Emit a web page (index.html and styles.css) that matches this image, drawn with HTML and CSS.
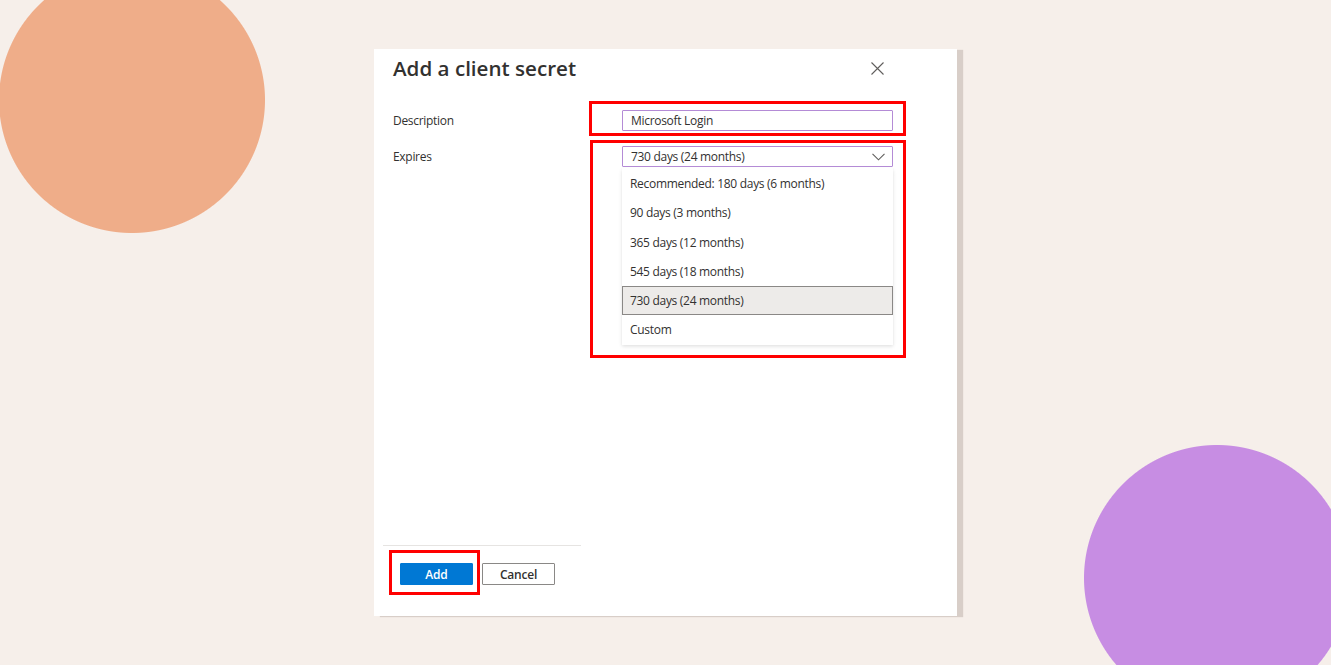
FILE: index.html
```html
<!DOCTYPE html>
<html lang="en">
<head>
  <meta charset="UTF-8">
  <title>Add a client secret</title>
  <link rel="stylesheet" href="styles.css">
</head>
<body>

  <div class="panel">
    <div class="panel-head">
      <h1>Add a client secret</h1>
      <button class="close-btn" aria-label="Close">
        <svg width="13" height="13" viewBox="0 0 13 13"><path d="M0.5 0.5L12.5 12.5M12.5 0.5L0.5 12.5" stroke="#605e5c" stroke-width="1.1" fill="none"/></svg>
      </button>
    </div>

    <div class="form">
      <!-- Descripcion -->
      <div class="row">
        <label class="row-label">Description</label>
        <div class="field">
          <div class="text-input">Microsoft Login</div>
        </div>
      </div>

      <!-- Expira -->
      <div class="row">
        <label class="row-label">Expires</label>
        <div class="field">
          <div class="select">
            <span>730 days (24 months)</span>
            <svg width="13" height="8" viewBox="0 0 13 8"><path d="M0.5 0.8L6.5 6.8L12.5 0.8" stroke="#605e5c" stroke-width="1.1" fill="none"/></svg>
          </div>
          <ul class="menu">
            <li>Recommended: 180 days (6 months)</li>
            <li>90 days (3 months)</li>
            <li>365 days (12 months)</li>
            <li>545 days (18 months)</li>
            <li class="selected">730 days (24 months)</li>
            <li>Custom</li>
          </ul>
        </div>
      </div>
    </div>

    <div class="footer">
      <div class="footer-line"></div>
      <div class="footer-btns">
        <button class="btn btn-primary">Add</button>
        <button class="btn">Cancel</button>
      </div>
    </div>

    <!-- marcas rojas -->
    <div class="mark mark-desc"></div>
    <div class="mark mark-expires"></div>
    <div class="mark mark-add"></div>
  </div>

</body>
</html>
```

FILE: styles.css
```css
html, body {
  height: 100%;
}
body {
  margin: 0;
  background:
    radial-gradient(circle at 132px 100px, #efad89 132.5px, transparent 133.5px),
    radial-gradient(circle at 1217px 578px, #c78de3 132.5px, transparent 133.5px),
    #f6efea;
  font-family: "Open Sans", "Noto Sans", sans-serif;
  color: #323130;
  display: flex;
  align-items: center;
  justify-content: center;
  overflow: hidden;
}
.panel {
  position: relative;
  width: 583px;
  height: 567px;
  background-color: white;
  box-shadow: 6px 1px 1px rgba(110, 90, 80, 0.22);
  display: flex;
  flex-direction: column;
  box-sizing: border-box;
  padding: 5px 64px 0 19px;
}
.panel-head {
  display: flex;
  justify-content: space-between;
  align-items: center;
  height: 28px;
}
.panel-head h1 {
  margin: 0;
  font-size: 20.6px;
  font-weight: 600;
  line-height: 28px;
}
.close-btn {
  border: none;
  background: none;
  padding: 0;
  margin-right: 9px;
  display: flex;
  cursor: pointer;
}
.form {
  flex: 1;
  padding-top: 28px;
}
.row {
  display: flex;
  margin-bottom: 15px;
}
.row-label {
  width: 229px;
  font-size: 12px;
  letter-spacing: -0.3px;
  line-height: 21px;
}
.field {
  width: 271px;
}
.text-input,
.select {
  height: 21px;
  box-sizing: border-box;
  border: 1.5px solid #b48bd6;
  border-radius: 1px;
  font-size: 12px;
  letter-spacing: -0.3px;
  line-height: 19px;
  padding: 0 8px;
}
.select {
  display: flex;
  justify-content: space-between;
  align-items: center;
  padding-right: 7px;
}
.menu {
  list-style: none;
  margin: 1px 0 0;
  padding: 1px 0 0;
  background-color: white;
  box-shadow: 0 1.6px 3.6px rgba(0, 0, 0, 0.13), 0 0.3px 0.9px rgba(0, 0, 0, 0.11);
}
.menu li {
  height: 29.3px;
  line-height: 29px;
  font-size: 12px;
  letter-spacing: -0.3px;
  padding: 0 8px;
  box-sizing: border-box;
}
.menu li.selected {
  background-color: #edebe9;
  border: 1px solid #8a8886;
  padding: 0 7px;
  line-height: 27px;
}
.footer {
  margin-left: -10px;
  padding-bottom: 31px;
}
.footer-line {
  width: 198px;
  height: 1px;
  background-color: #e6e4e2;
  margin-bottom: 17px;
}
.footer-btns {
  display: flex;
  gap: 9px;
  padding-left: 17px;
}
.btn {
  width: 73px;
  height: 22px;
  box-sizing: border-box;
  font-family: "Open Sans", "Noto Sans", sans-serif;
  font-size: 12px;
  font-weight: 600;
  letter-spacing: -0.2px;
  color: #323130;
  background-color: white;
  border: 1px solid #8a8886;
  border-radius: 1px;
  padding: 0;
  cursor: pointer;
}
.btn-primary {
  background-color: #0078d4;
  border-color: #0078d4;
  color: white;
}
.mark {
  position: absolute;
  border: 3px solid #ff0000;
  box-sizing: border-box;
}
.mark-desc {
  left: 215px;
  top: 52px;
  width: 317px;
  height: 35px;
}
.mark-expires {
  left: 216px;
  top: 91px;
  width: 316px;
  height: 218px;
}
.mark-add {
  left: 15px;
  top: 501px;
  width: 91px;
  height: 45px;
}
```
